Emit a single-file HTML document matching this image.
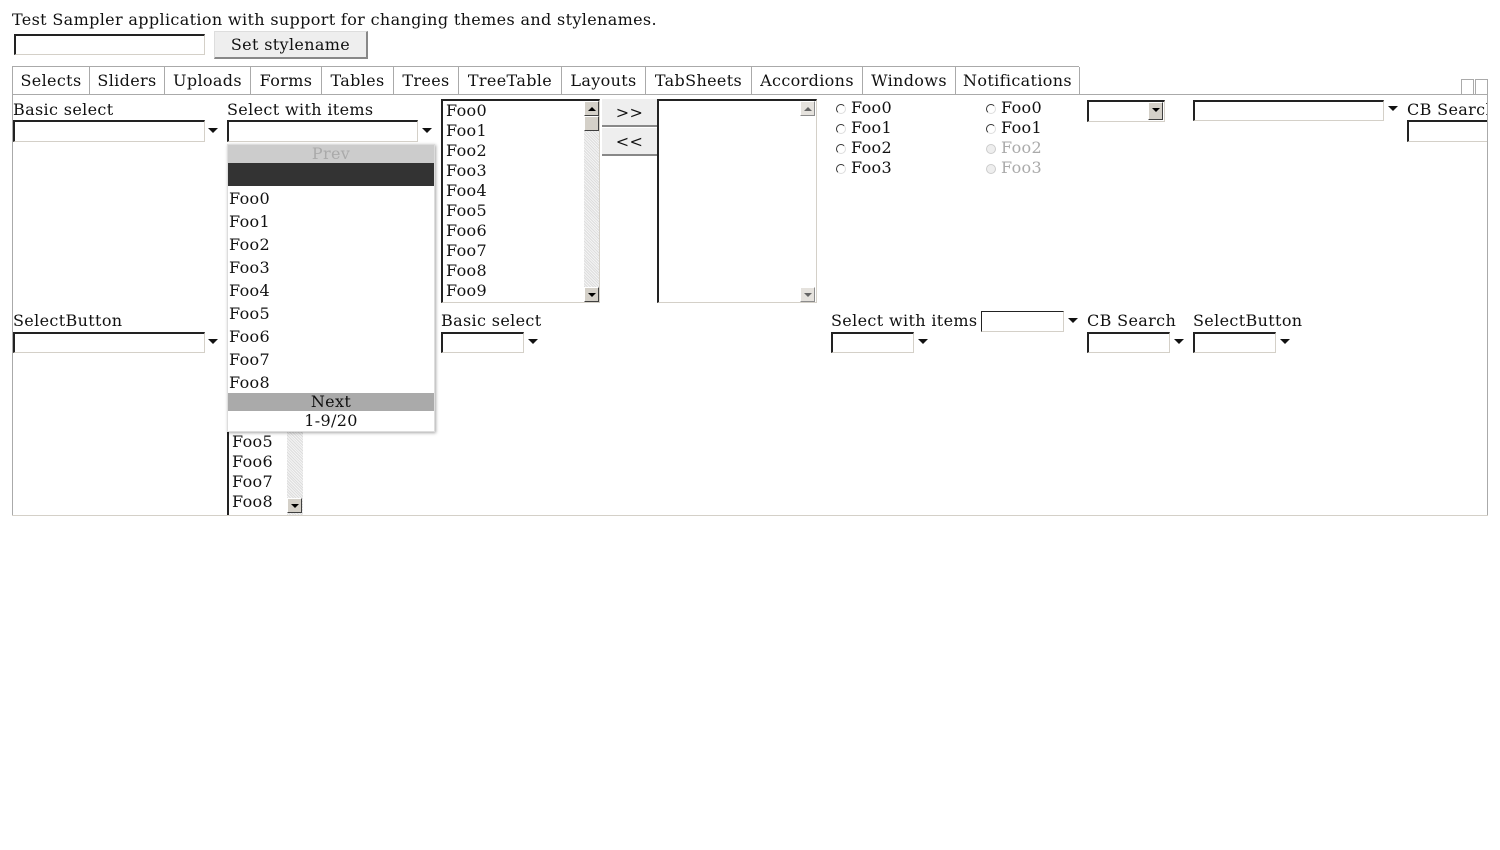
<!DOCTYPE html>
<html><head><meta charset="utf-8"><style>
body{margin:0;width:1500px;height:850px;background:#fff;font-family:"DejaVu Serif","Liberation Serif",serif;font-size:16px;letter-spacing:0.35px;color:#111;position:relative;overflow:hidden}
.a{position:absolute;white-space:nowrap;line-height:18px}
.f{position:absolute;box-sizing:border-box;border-top:2px solid #222;border-left:2px solid #222;border-right:1px solid #d4d0c8;border-bottom:1px solid #d4d0c8;background:#fff}
.ar{position:absolute;width:0;height:0;border-left:5px solid transparent;border-right:5px solid transparent;border-top:5px solid #111}
.tab{position:absolute;top:67px;height:27px;border-right:1px solid #aaa;line-height:27px;text-align:center;box-sizing:border-box}
.sb{position:absolute;width:15px;height:15px;box-sizing:border-box;background:#d4d0c8;border:1px solid;border-color:#fff #404040 #404040 #fff}
.sb:after{content:"";position:absolute;left:3px;top:5px;border-left:4px solid transparent;border-right:4px solid transparent}
.up:after{border-bottom:4px solid #000}
.dn:after{border-top:4px solid #000}
.gr:after{border-color:transparent;}
.trk{position:absolute;background:repeating-linear-gradient(45deg,#ddd 0 1px,#f4f4f4 1px 2px)}
.rd{position:absolute;width:8px;height:8px;border-radius:50%;border:1px solid #333;border-right-color:#ddd;border-bottom-color:#ddd;background:#fff}
</style></head><body>
<div class="a" style="left:12px;top:11px">Test Sampler application with support for changing themes and stylenames.</div>
<div class="f" style="left:14px;top:34px;width:191px;height:21px"></div>
<div class="a" style="left:214px;top:31px;width:154px;height:28px;box-sizing:border-box;background:#eee;border:1px solid #ddd;border-right:2px solid #888;border-bottom:2px solid #888;text-align:center;line-height:26px">Set stylename</div>

<div style="position:absolute;left:12px;top:66px;width:1067px;height:1px;background:#aaa"></div>
<div style="position:absolute;left:12px;top:94px;width:1476px;height:1px;background:#aaa"></div>
<div style="position:absolute;left:12px;top:67px;width:1px;height:27px;background:#aaa"></div>
<div class="tab" style="left:13px;width:77px">Selects</div>
<div class="tab" style="left:90px;width:75px">Sliders</div>
<div class="tab" style="left:165px;width:86px">Uploads</div>
<div class="tab" style="left:251px;width:71px">Forms</div>
<div class="tab" style="left:322px;width:72px">Tables</div>
<div class="tab" style="left:394px;width:65px">Trees</div>
<div class="tab" style="left:459px;width:103px">TreeTable</div>
<div class="tab" style="left:562px;width:84px">Layouts</div>
<div class="tab" style="left:646px;width:106px">TabSheets</div>
<div class="tab" style="left:752px;width:111px">Accordions</div>
<div class="tab" style="left:863px;width:93px">Windows</div>
<div class="tab" style="left:956px;width:124px">Notifications</div>
<div style="position:absolute;left:1461px;top:79px;width:13px;height:15px;border:1px solid #aaa;border-bottom:0;box-sizing:border-box"></div>
<div style="position:absolute;left:1475px;top:79px;width:13px;height:15px;border:1px solid #aaa;border-bottom:0;box-sizing:border-box"></div>

<div style="position:absolute;left:12px;top:95px;width:1px;height:421px;background:#aaa"></div>
<div style="position:absolute;left:1487px;top:95px;width:1px;height:421px;background:#aaa"></div>
<div style="position:absolute;left:12px;top:515px;width:1476px;height:1px;background:#d4d0c8"></div>

<!-- row 1 -->
<div class="a" style="left:13px;top:101px">Basic select</div>
<div class="f" style="left:13px;top:120px;width:192px;height:22px"></div><div class="ar" style="left:208px;top:128px"></div>
<div class="a" style="left:227px;top:101px">Select with items</div>
<div class="f" style="left:227px;top:120px;width:191px;height:22px"></div><div class="ar" style="left:422px;top:128px"></div>

<div class="f" style="left:441px;top:99px;width:159px;height:204px;border-top-width:2px"></div>
<div class="trk" style="left:584px;top:101px;width:15px;height:200px"></div>
<div class="sb up" style="left:584px;top:101px"></div>
<div class="sb gr" style="left:584px;top:116px;height:15px"></div>
<div class="sb dn" style="left:584px;top:287px"></div>
<div class="a" style="left:446px;top:101px;line-height:20px">Foo0<br>Foo1<br>Foo2<br>Foo3<br>Foo4<br>Foo5<br>Foo6<br>Foo7<br>Foo8<br>Foo9</div>

<div class="a" style="left:602px;top:99px;width:55px;height:28px;background:#eee;border-bottom:2px solid #888;box-sizing:border-box;text-align:center;line-height:28px">&gt;&gt;</div>
<div class="a" style="left:602px;top:128px;width:55px;height:28px;background:#eee;border-bottom:2px solid #888;box-sizing:border-box;text-align:center;line-height:28px">&lt;&lt;</div>

<div class="f" style="left:657px;top:99px;width:160px;height:204px"></div>
<div class="sb up" style="left:800px;top:101px;opacity:.6"></div>
<div class="sb dn" style="left:800px;top:287px;opacity:.6"></div>

<div class="rd" style="left:836px;top:104px"></div><div class="a" style="left:851px;top:98px;line-height:20px">Foo0<br>Foo1<br>Foo2<br>Foo3</div>
<div class="rd" style="left:836px;top:124px"></div><div class="rd" style="left:836px;top:144px"></div><div class="rd" style="left:836px;top:164px"></div>
<div class="rd" style="left:986px;top:104px"></div><div class="rd" style="left:986px;top:124px"></div>
<div class="rd" style="left:986px;top:144px;border-color:#ccc;background:#eee"></div><div class="rd" style="left:986px;top:164px;border-color:#ccc;background:#eee"></div>
<div class="a" style="left:1001px;top:98px;line-height:20px">Foo0<br>Foo1<br><span style="color:#aaa">Foo2<br>Foo3</span></div>

<div class="f" style="left:1087px;top:100px;width:78px;height:22px"></div>
<div class="sb dn" style="left:1148px;top:102px;width:15px;height:18px"></div>
<div class="f" style="left:1193px;top:100px;width:191px;height:21px"></div><div class="ar" style="left:1388px;top:106px"></div>
<div style="position:absolute;left:1407px;top:95px;width:80px;height:60px;overflow:hidden">
<div class="a" style="left:0;top:6px">CB Search</div>
<div class="f" style="left:0;top:25px;width:100px;height:22px"></div>
</div>

<!-- row 2 -->
<div class="a" style="left:13px;top:312px">SelectButton</div>
<div class="f" style="left:13px;top:332px;width:192px;height:21px"></div><div class="ar" style="left:208px;top:339px"></div>
<div class="a" style="left:441px;top:312px">Basic select</div>
<div class="f" style="left:441px;top:332px;width:83px;height:21px"></div><div class="ar" style="left:528px;top:339px"></div>
<div class="a" style="left:831px;top:312px">Select with items</div>
<div class="f" style="left:981px;top:311px;width:83px;height:21px;border-top-width:1px;border-left-width:1px"></div><div class="ar" style="left:1068px;top:318px"></div>
<div class="f" style="left:831px;top:332px;width:83px;height:21px"></div><div class="ar" style="left:918px;top:339px"></div>
<div class="a" style="left:1087px;top:312px">CB Search</div>
<div class="f" style="left:1087px;top:332px;width:83px;height:21px"></div><div class="ar" style="left:1174px;top:339px"></div>
<div class="a" style="left:1193px;top:312px">SelectButton</div>
<div class="f" style="left:1193px;top:332px;width:83px;height:21px"></div><div class="ar" style="left:1280px;top:339px"></div>

<!-- list under popup -->
<div style="position:absolute;left:227px;top:300px;width:2px;height:215px;background:#222"></div>
<div class="trk" style="left:287px;top:300px;width:16px;height:215px"></div>
<div class="sb dn" style="left:287px;top:498px"></div>
<div class="a" style="left:232px;top:432px;line-height:20px">Foo5<br>Foo6<br>Foo7<br>Foo8</div>

<!-- popup -->
<div style="position:absolute;left:227px;top:144px;width:208px;height:288px;background:#fff;border:1px solid #ddd;box-sizing:border-box;box-shadow:1px 1px 3px rgba(0,0,0,.35)"></div>
<div class="a" style="left:228px;top:145px;width:206px;height:18px;background:#ccc;color:#aaa;text-align:center">Prev</div>
<div class="a" style="left:228px;top:163px;width:206px;height:23px;background:#333"></div>
<div class="a" style="left:229px;top:187px;line-height:23px">Foo0<br>Foo1<br>Foo2<br>Foo3<br>Foo4<br>Foo5<br>Foo6<br>Foo7<br>Foo8</div>
<div class="a" style="left:228px;top:393px;width:206px;height:18px;background:#aaa;text-align:center">Next</div>
<div class="a" style="left:228px;top:412px;width:206px;text-align:center">1-9/20</div>
</body></html>
